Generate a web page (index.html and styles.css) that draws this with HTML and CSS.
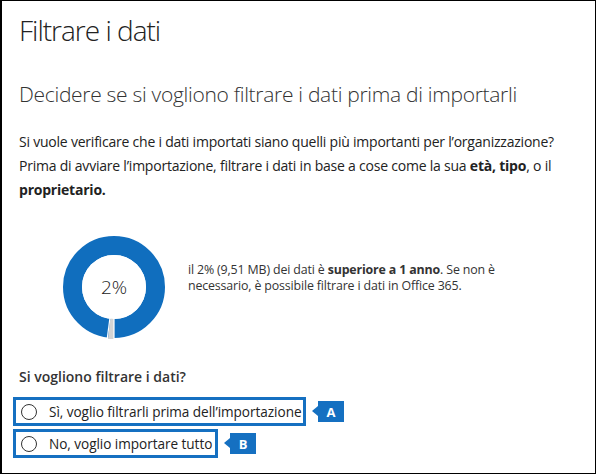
FILE: index.html
```html
<!DOCTYPE html>
<html lang="it">
<head>
<meta charset="utf-8">
<title>Filtrare i dati</title>
<link rel="stylesheet" href="styles.css">
</head>
<body>
<div class="frame">
  <h1 class="title">Filtrare i dati</h1>
  <h2 class="subtitle">Decidere se si vogliono filtrare i dati prima di importarli</h2>
  <p class="intro">Si vuole verificare che i dati importati siano quelli più importanti per l’organizzazione?<br>Prima di avviare l’importazione, filtrare i dati in base a cose come la sua <b>età, tipo</b>, o il<br><b>proprietario.</b></p>
  <div class="stat">
    <div class="donut">
      <svg width="104" height="104" viewBox="0 0 104 104">
        <circle cx="52" cy="52" r="41.5" fill="none" stroke="#106ebe" stroke-width="19"/>
        <path d="M52 52 L52 104 L46 104 Z" fill="#d4d4d4"/>
        <line x1="52" y1="70" x2="52" y2="104" stroke="#fff" stroke-width="1.2"/>
        <line x1="52" y1="52" x2="45.2" y2="104" stroke="#fff" stroke-width="1.2"/>
        <circle cx="52" cy="52" r="32" fill="#fff"/>
      </svg>
      <span class="donut-label">2%</span>
    </div>
    <p class="stat-text">il 2% (9,51 MB) dei dati è <b>superiore a 1 anno</b>. Se non è<br>necessario, è possibile filtrare i dati in Office 365.</p>
  </div>
  <h3 class="question">Si vogliono filtrare i dati?</h3>
  <div class="options">
    <div class="option-row">
      <label class="option option-a"><span class="radio"></span><span>Sì, voglio filtrarli prima dell’importazione</span></label>
      <span class="callout">A</span>
    </div>
    <div class="option-row">
      <label class="option option-b"><span class="radio"></span><span>No, voglio importare tutto</span></label>
      <span class="callout">B</span>
    </div>
  </div>
</div>
</body>
</html>
```
FILE: styles.css
```css
html, body {
  margin: 0;
  padding: 0;
  background: #fff;
}
.frame {
  box-sizing: border-box;
  width: 596px;
  height: 474px;
  border: 1px solid #000;
  border-left-width: 2px;
  padding: 0 0 0 17px;
  font-family: "Open Sans", "Noto Sans", sans-serif;
  color: #333;
}
.title {
  margin: 10px 0 0 0;
  font-size: 28px;
  font-weight: 300;
  line-height: 38px;
  color: #222;
  letter-spacing: -1px;
}
.subtitle {
  margin: 31px 0 0 0;
  font-size: 21px;
  font-weight: 300;
  line-height: 28px;
  color: #333;
  letter-spacing: -0.3px;
}
.intro {
  margin: 22px 0 0 0;
  font-size: 14px;
  line-height: 24px;
  color: #222;
  white-space: nowrap;
  letter-spacing: -0.22px;
}
.intro b, .stat-text b {
  font-weight: 700;
}
.stat {
  display: flex;
  align-items: center;
  margin: 33px 0 0 43px;
  gap: 22px;
}
.donut {
  position: relative;
  width: 104px;
  height: 104px;
}
.donut svg {
  display: block;
}
.donut-label {
  position: absolute;
  inset: 0;
  display: flex;
  align-items: center;
  justify-content: center;
  font-size: 19px;
  font-weight: 300;
  color: #222;
}
.stat-text {
  margin: 0 0 18px 0;
  font-size: 12.4px;
  line-height: 16px;
  color: #333;
  white-space: nowrap;
  letter-spacing: -0.15px;
}
.question {
  margin: 28px 0 0 0;
  font-size: 14px;
  font-weight: 600;
  line-height: 20px;
  color: #333;
}
.options {
  display: flex;
  flex-direction: column;
  gap: 3px;
  margin: 10px 0 0 -6px;
}
.option-row {
  display: flex;
  align-items: center;
  gap: 6px;
}
.option {
  box-sizing: border-box;
  display: flex;
  align-items: center;
  gap: 12px;
  height: 29px;
  padding: 0 0 0 5px;
  border: 3px solid #1570c1;
  font-size: 13.6px;
  color: #222;
  letter-spacing: -0.05px;
}
.option-a { width: 293px; }
.option-b { width: 205px; }
.radio {
  box-sizing: border-box;
  width: 16px;
  height: 16px;
  border: 1.5px solid #333;
  border-radius: 50%;
  flex: none;
}
.callout {
  position: relative;
  box-sizing: border-box;
  width: 26px;
  height: 21px;
  margin-left: 6px;
  background: #1570c1;
  color: #fff;
  font-size: 13px;
  font-weight: 700;
  display: flex;
  align-items: center;
  justify-content: center;
}
.callout::before {
  content: "";
  position: absolute;
  left: -6px;
  top: 5px;
  border-style: solid;
  border-width: 5.5px 6px 5.5px 0;
  border-color: transparent #1570c1 transparent transparent;
}
```
